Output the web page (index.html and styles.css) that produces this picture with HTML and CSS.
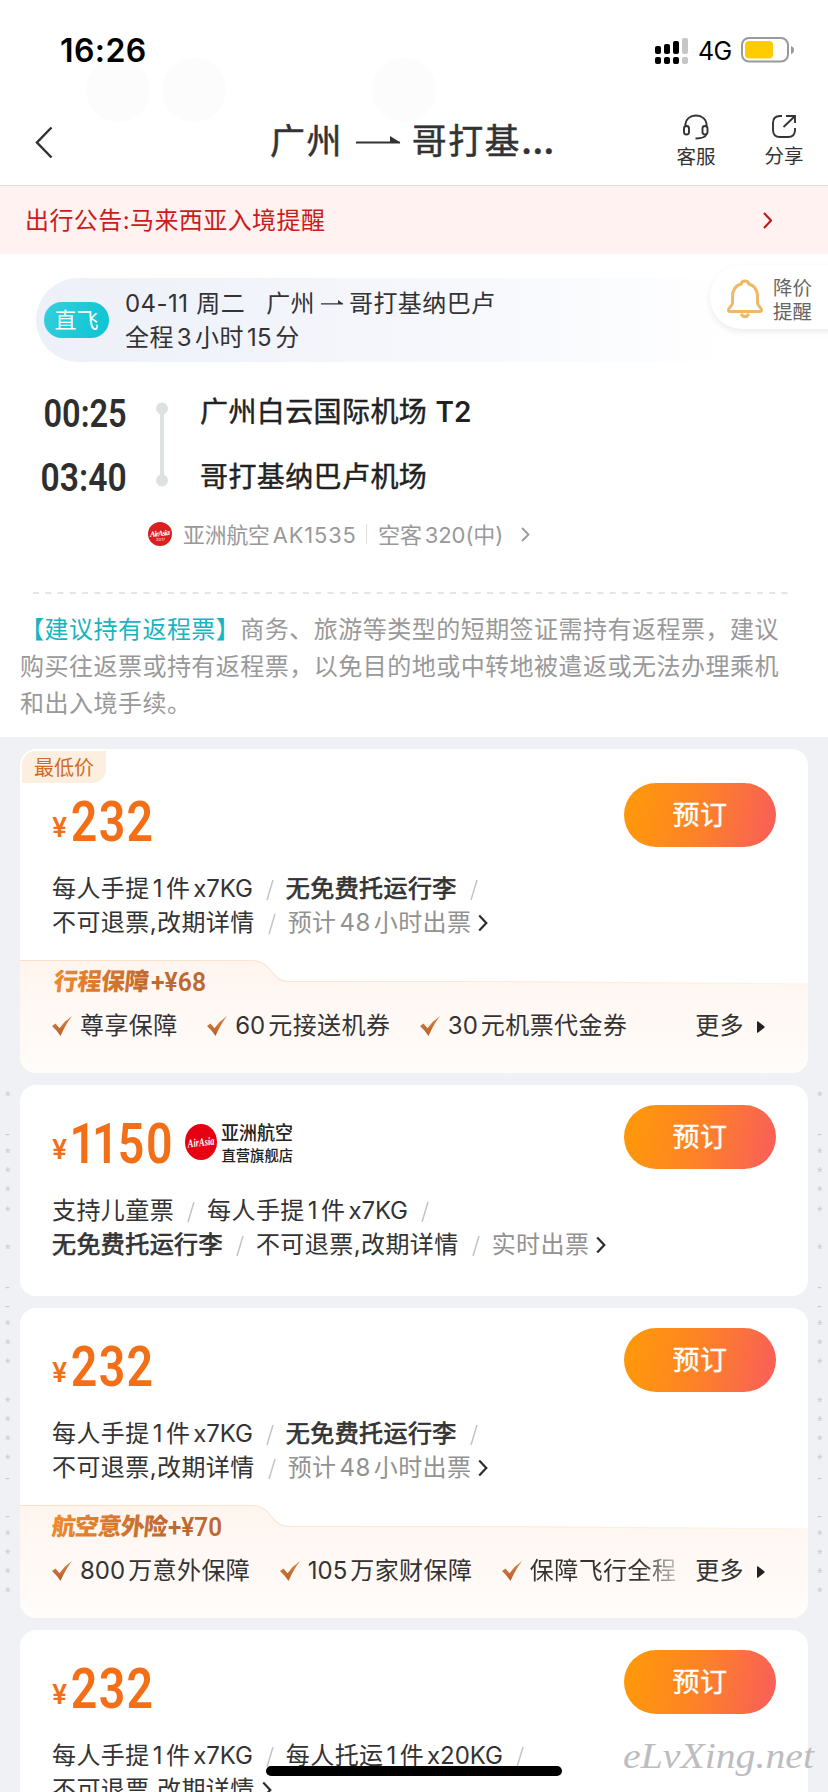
FILE: index.html
```
<!DOCTYPE html>
<html lang="zh-CN">
<head>
<meta charset="utf-8">
<title>广州 - 哥打基纳巴卢</title>
<link rel="stylesheet" href="styles.css">
</head>
<body>
<svg class="defs" width="0" height="0" aria-hidden="true">
  <defs>
    <linearGradient id="gold" x1="0" y1="0" x2="1" y2="0"><stop offset="0" stop-color="#ee8a2e"/><stop offset="1" stop-color="#c0692f"/></linearGradient>
    <linearGradient id="tick" x1="0" y1="0" x2="0" y2="1"><stop offset="0" stop-color="#df8540"/><stop offset="1" stop-color="#b75e2c"/></linearGradient>
    <linearGradient id="panel" x1="0" y1="0" x2="0" y2="1"><stop offset="0" stop-color="#fff5ef"/><stop offset="1" stop-color="#fffcfa"/></linearGradient>
    <linearGradient id="edge" x1="0" y1="0" x2="1" y2="0"><stop offset="0" stop-color="#fbe0c6"/><stop offset=".4" stop-color="#fbe6d6"/><stop offset="1" stop-color="#fff3e8"/></linearGradient>
  </defs>
  <symbol id="slash" viewBox="0 0 8 22"><path d="M7 1 1 21" stroke="#c4c4c4" stroke-width="1.5" fill="none"/></symbol>
  <symbol id="more" viewBox="0 0 10 18"><path d="M1.2 1.6 8.3 9 1.2 16.4" stroke="#2c2c2c" stroke-width="2.2" fill="none"/></symbol>
  <symbol id="check" viewBox="0 0 20 20"><path d="M0 10 3.500 7.500 7.500 12.200Q12.500 5 20 0 13.500 8.500 8.500 20 5 14.500 0 10Z" fill="url(#tick)"/></symbol>
  <symbol id="tri" viewBox="0 0 8 12"><path d="M0 1Q0-.4 1.200.5L7.300 5.200Q8 6 7.300 6.800L1.200 11.500Q0 12.400 0 11Z" fill="#222"/></symbol>
  <symbol id="cover" viewBox="0 0 788 113"><path d="M0 .5H230C255 .5 248 21.500 270 21.500H480L788 24V113H0Z" fill="url(#panel)"/><path d="M0 .5H230C255 .5 248 21.500 270 21.500H480L788 24" fill="none" stroke="url(#edge)" stroke-width="1.2"/></symbol>
</svg>

<main class="page">
  <div class="circles"><i></i><i></i><i></i></div>
  <header class="top">
    <div class="status">
      <span class="clock">16:26</span>
      <svg class="signal" width="33" height="26" viewBox="0 0 33 26"><rect y="8" width="6" height="8" rx="2"/><rect x="9" y="6" width="6" height="10" rx="2"/><rect x="18" y="3" width="6" height="13" rx="2"/><rect x="27" y="0" width="6" height="16" rx="2" fill="#c6c6c6"/><rect y="19" width="6" height="7" rx="2"/><rect x="9" y="19" width="6" height="7" rx="2"/><rect x="18" y="19" width="6" height="7" rx="2"/><rect x="27" y="19" width="6" height="7" rx="2" fill="#c6c6c6"/></svg>
      <span class="net">4G</span>
      <svg class="battery" width="53" height="26" viewBox="0 0 53 26"><rect x="1" y="1" width="46" height="23.500" rx="7" fill="#fff" stroke="#999" stroke-width="2"/><rect x="4" y="4" width="28" height="17.500" rx="4" fill="#fc0"/><path d="M50 9Q53 10 53 13T50 17Z" fill="#999"/></svg>
    </div>
    <nav class="nav">
      <svg class="back" width="18" height="33" viewBox="0 0 18 33"><path d="M16.500 1.500 2 16.500 16.500 31.500" fill="none" stroke="#333" stroke-width="2.500"/></svg>
      <h1 class="title">广州<svg class="title-arrow" width="46" height="8" viewBox="0 0 46 8"><path d="M1 5.500H45V7.500H1ZM35 0 45.500 6.500H35Z" fill="#333"/></svg>哥打基<span class="dots">...</span></h1>
      <div class="action">
        <svg width="28" height="26" viewBox="0 0 28 26" fill="none" stroke="#333" stroke-width="1.900"><path d="M3.500 12C2.500-2 25.500-2 24.500 12"/><rect x="2" y="12" width="5" height="8.500" rx="2.500"/><rect x="20.500" y="12" width="5" height="8.500" rx="2.500"/><path d="M24.500 20Q23 24.600 13.500 24.500"/></svg>
        <span>客服</span>
      </div>
      <div class="action share">
        <svg width="26" height="25" viewBox="0 0 26 25" fill="none" stroke="#333" stroke-width="1.900"><path d="M11 2H9Q2 2 2 9V16Q2 23 9 23H17Q24 23 24 16V14M15 2H24V9M23.500 2.500 12.500 13"/></svg>
        <span>分享</span>
      </div>
    </nav>
  </header>

  <section class="notice"><span>出行公告:马来西亚入境提醒</span><svg width="9" height="17" viewBox="0 0 9 17"><path d="M1 1 8 8.500 1 16" stroke="#c21414" stroke-width="2" fill="none"/></svg></section>

  <section class="flight">
    <div class="summary">
      <span class="direct">直飞</span>
      <div class="route">
        <div>04-11<span class="day">周二</span><span class="od">广州</span><svg width="23" height="5" viewBox="0 0 23 5"><path d="M0 3.200H22V4.400H0ZM17 0 22.500 4H17Z" fill="#333"/></svg>哥打基纳巴卢</div>
        <div>全程<b class="n">3</b>小时<b class="n">15</b>分</div>
      </div>
    </div>
    <div class="legs">
      <svg class="times" width="170" height="110" viewBox="0 0 170 110"><g transform="scale(.82 1)"><text x="53" y="37" textLength="101.500" lengthAdjust="spacingAndGlyphs">00:25</text><text x="49.500" y="101" textLength="105" lengthAdjust="spacingAndGlyphs">03:40</text></g><path d="M162 18V91" stroke="#dde1e1" stroke-width="4"/><circle cx="162" cy="18.500" r="6" fill="#dde1e1"/><circle cx="162" cy="90.500" r="6" fill="#dde1e1"/></svg>
      <div class="ports"><div>广州白云国际机场 <span class="t2">T2</span></div><div>哥打基纳巴卢机场</div></div>
    </div>
    <div class="carrier">
      <svg width="24" height="24" viewBox="0 0 24 24"><circle cx="12" cy="12" r="12" fill="#d9201f"/><text class="brand" x="2" y="14" textLength="20" font-size="8" transform="rotate(-6 12 12)">AirAsia</text><text x="8" y="19" textLength="9" font-size="4" fill="#fff">2017</text></svg>
      <span class="name">亚洲航空<b class="n">AK1535</b></span><i class="bar"></i><span>空客<b class="n type">320(</b>中<b>)</b></span>
      <svg class="chev" width="9" height="15" viewBox="0 0 9 15"><path d="M1 1 7.500 7.500 1 14" stroke="#999" stroke-width="1.800" fill="none"/></svg>
    </div>
    <svg class="dash" width="760" height="2"><path d="M0 1H760" stroke="#ddd" stroke-width="1.500" stroke-dasharray="6 6.270"/></svg>
    <p class="advice"><em>【建议持有返程票】</em>商务、旅游等类型的短期签证需持有返程票，建议<br>购买往返票或持有返程票，以免目的地或中转地被遣返或无法办理乘机<br>和出入境手续。</p>
  </section>

  <section class="list">
    <pre class="stars left">*

-
****

*

--
***

****
-

-
****</pre>
    <pre class="stars right">*

-
****

*

--
***

****
-

-
****</pre>

    <article class="card lowest">
      <span class="tag">最低价</span>
      <div class="head">
        <svg class="price" width="110" height="60" viewBox="0 0 110 60"><text class="yen" x="-1" y="54" textLength="18">¥</text><text transform="scale(.83 1)" x="21.500 55 88.500" y="58">232</text></svg>
        <a class="book">预订</a>
      </div>
      <div class="info">每人手提<b class="n">1</b>件<b class="n kg">x7KG</b><svg class="sl"><use href="#slash"/></svg><strong>无免费托运行李</strong><svg class="sl"><use href="#slash"/></svg><br>不可退票,改期详情<svg class="sl"><use href="#slash"/></svg><span class="dim">预计<b class="n">48</b>小时出票</span><svg class="ch"><use href="#more"/></svg></div>
      <div class="cover">
        <svg class="cover-bg" width="788" height="113"><use href="#cover"/></svg>
        <svg class="cover-title" width="220" height="32" viewBox="0 0 220 32"><text class="cn" transform="translate(0 29.500) skewX(-6)" x="0" y="0" textLength="95">行程保障</text><text class="amount" x="98" y="30.500" textLength="55" lengthAdjust="spacingAndGlyphs">+¥68</text></svg>
        <div class="perks"><span><svg class="ck"><use href="#check"/></svg>尊享保障</span><span><svg class="ck"><use href="#check"/></svg><b class="lead">60</b>元接送机券</span><span><svg class="ck"><use href="#check"/></svg><b class="lead">30</b>元机票代金券</span><span class="all">更多<svg class="tri"><use href="#tri"/></svg></span></div>
      </div>
    </article>

    <article class="card plain">
      <div class="head">
        <svg class="price" width="250" height="60" viewBox="0 0 250 60"><text class="yen" x="-1" y="54" textLength="18">¥</text><text transform="scale(.83 1)" x="20 47 78 112" y="58">1150</text><ellipse cx="148" cy="37" rx="16" ry="18" fill="#e60012"/><text class="brand" x="134.500" y="41" font-size="11.500" textLength="27" lengthAdjust="spacingAndGlyphs" transform="rotate(-6 148 37)">AirAsia</text><text class="shop" x="168" y="35" textLength="72" lengthAdjust="spacingAndGlyphs">亚洲航空</text><text class="shop small" x="168.500" y="56" textLength="71.500" lengthAdjust="spacingAndGlyphs">直营旗舰店</text></svg>
        <a class="book">预订</a>
      </div>
      <div class="info">支持儿童票<svg class="sl"><use href="#slash"/></svg>每人手提<b class="n">1</b>件<b class="n kg">x7KG</b><svg class="sl"><use href="#slash"/></svg><br><strong>无免费托运行李</strong><svg class="sl"><use href="#slash"/></svg>不可退票,改期详情<svg class="sl"><use href="#slash"/></svg><span class="dim">实时出票</span><svg class="ch"><use href="#more"/></svg></div>
    </article>

    <article class="card">
      <div class="head">
        <svg class="price" width="110" height="60" viewBox="0 0 110 60"><text class="yen" x="-1" y="54" textLength="18">¥</text><text transform="scale(.83 1)" x="21.500 55 88.500" y="58">232</text></svg>
        <a class="book">预订</a>
      </div>
      <div class="info">每人手提<b class="n">1</b>件<b class="n kg">x7KG</b><svg class="sl"><use href="#slash"/></svg><strong>无免费托运行李</strong><svg class="sl"><use href="#slash"/></svg><br>不可退票,改期详情<svg class="sl"><use href="#slash"/></svg><span class="dim">预计<b class="n">48</b>小时出票</span><svg class="ch"><use href="#more"/></svg></div>
      <div class="cover">
        <svg class="cover-bg" width="788" height="113"><use href="#cover"/></svg>
        <svg class="cover-title" width="220" height="32" viewBox="0 0 220 32"><text class="cn" transform="translate(-2 29.500) skewX(-6)" x="0" y="0" textLength="116">航空意外险</text><text class="amount" x="115" y="30.500" textLength="54" lengthAdjust="spacingAndGlyphs">+¥70</text></svg>
        <div class="perks"><span><svg class="ck"><use href="#check"/></svg><b class="lead">800</b>万意外保障</span><span><svg class="ck"><use href="#check"/></svg><b class="lead">105</b>万家财保障</span><span class="fade"><svg class="ck"><use href="#check"/></svg>保障飞行全程</span><span class="all">更多<svg class="tri"><use href="#tri"/></svg></span></div>
      </div>
    </article>

    <article class="card plain">
      <div class="head">
        <svg class="price" width="110" height="60" viewBox="0 0 110 60"><text class="yen" x="-1" y="54" textLength="18">¥</text><text transform="scale(.83 1)" x="21.500 55 88.500" y="58">232</text></svg>
        <a class="book">预订</a>
      </div>
      <div class="info">每人手提<b class="n">1</b>件<b class="n kg">x7KG</b><svg class="sl"><use href="#slash"/></svg>每人托运<b class="n">1</b>件<b class="n kg">x20KG</b><svg class="sl"><use href="#slash"/></svg><br>不可退票,改期详情<svg class="ch"><use href="#more"/></svg></div>
    </article>
  </section>

  <aside class="alert">
    <svg width="36" height="40" viewBox="0 0 36 40" fill="none" stroke="#f2b766" stroke-width="3"><path d="M18 2C15.500 2 14.500 3.500 14.200 5 8 6.500 5.500 12 5.500 18V24C5.500 27 1.500 28.500 1.500 31 1.500 32 2 32.500 3 32.500H33C34 32.500 34.500 32 34.500 31 34.500 28.500 30.500 27 30.500 24V18C30.500 12 28 6.500 21.800 5 21.500 3.500 20.500 2 18 2Z"/><path d="M14 35Q18 40.500 22 35"/></svg>
    <span>降价<br>提醒</span>
  </aside>
  <div class="home"></div>
  <svg class="mark" width="206" height="54"><text x="3" y="34" textLength="191" lengthAdjust="spacingAndGlyphs">eLvXing.net</text></svg>
</main>
</body>
</html>
```
FILE: styles.css
```
* { box-sizing: border-box; }
body { margin: 0; background: #fff; }
.defs { position: absolute; }
.page {
  position: relative; width: 828px; height: 1792px; overflow: hidden; background: #fff; color: #333;
  font: 24px/34px Inter, "Noto Sans CJK SC", sans-serif; letter-spacing: .42px;
}
svg { flex: none; }
b { font-weight: 400; }

.circles i { position: absolute; top: 58px; left: 86px; width: 64px; height: 64px; border-radius: 50%; background: #fcfcfc; }
.circles i:nth-child(2) { left: 162px; }
.circles i:nth-child(3) { left: 372px; }

.top { position: relative; height: 186px; border-bottom: 1px solid #dedcdc; }
.status { display: flex; align-items: center; height: 100px; padding-left: 60px; color: #000; }
.clock { width: 595px; padding-top: 1px; font-size: 32px; font-weight: 600; letter-spacing: .4px; }
.signal { margin-top: 1px; }
.net { width: 43px; padding: 2px 0 0 10px; font-size: 25px; letter-spacing: -.6px; }
.battery { margin-left: 10px; }
.nav { display: flex; align-items: flex-start; padding-left: 35px; }
.back { margin-top: 26px; }
.title { width: 606px; margin: 15px 0 0; padding-left: 217px; font-size: 35px; font-weight: 400; line-height: 52px; letter-spacing: 1.4px; white-space: nowrap; -webkit-text-stroke: .5px #333; }
.title-arrow { margin: 0 11px 0 12px; vertical-align: 10px; }
.dots { font-weight: 600; letter-spacing: 0; }
.action { width: 54px; margin: 14px 0 0 10px; display: flex; flex-direction: column; align-items: center; font-size: 19.500px; line-height: 24px; letter-spacing: 0; }
.action svg { margin-bottom: 5px; }
.action.share { margin-left: 34px; }

.notice { display: flex; justify-content: space-between; align-items: center; height: 68px; padding: 0 56px 0 25px; background: #fff2f1; color: #cb1c1c; }
.notice span { padding-top: 2px; }

.flight { height: 483px; padding-top: 24px; }
.summary { display: flex; align-items: center; height: 84px; margin-left: 36px; width: 700px; border-radius: 42px; background: linear-gradient(90deg, #eef0f9, #f5f7fc 55%, #fff); padding-left: 8px; }
.direct { width: 65px; height: 36px; border-radius: 18px; margin-right: 16px; background: linear-gradient(115deg, #35cfdc, #0bc4d3); color: #fff; font-size: 22px; line-height: 36px; text-align: center; letter-spacing: 0; }
.route { height: 68px; margin-top: 2px; }
.route svg { margin: 0 5px 0 6px; vertical-align: 7px; }
.day { margin-left: 8px; }
.od { margin-left: 21px; }
.n { margin: 0 3px; }
.legs { display: flex; height: 134px; padding-top: 28px; }
.times text { font: 600 38px Roboto; fill: #2e2e2e; letter-spacing: 0; }
.ports { padding-left: 30px; margin-top: -10.500px; font-size: 28px; line-height: 65.500px; letter-spacing: .4px; color: #222; -webkit-text-stroke: .45px #222; }
.t2 { font-weight: 600; -webkit-text-stroke: 0; font-size: 28px; letter-spacing: 0; }
.carrier { display: flex; align-items: center; height: 34px; margin-top: 21px; padding-left: 148px; color: #999; font-size: 22px; letter-spacing: -.1px; }
.carrier span { padding-top: 2px; }
.name { margin-left: 11px; width: 183px; font-size: 21.800px; }
.bar { width: 1px; height: 20px; margin-right: 11px; background: #ddd; }
.name .n { margin-right: 0; letter-spacing: .9px; }
.type { margin-right: 0; }
.chev { margin-left: 18px; }
.brand { font-family: "Liberation Serif", serif; font-style: italic; font-weight: 700; fill: #fff; letter-spacing: 0; }
.dash { display: block; margin: 41px 0 0 33px; }
.advice { margin: 17px 0 0 20px; line-height: 37px; color: #999; white-space: nowrap; letter-spacing: .48px; }
.advice em { font-style: normal; color: #18b4c2; }

.list { position: relative; display: flex; flex-direction: column; gap: 12px; padding: 12px 20px; background: #f0f1f5; height: 1055px; }
.stars { position: absolute; top: 350px; margin: 0; font: 14px/19.100px "Liberation Sans", sans-serif; color: #c9cbd0; width: 1px; left: 5px; word-break: break-all; white-space: pre-wrap; letter-spacing: 0; }
.stars.right { left: 817px; }
.card { position: relative; flex: none; padding: 0 32px 0 33px; border-radius: 16px; background: #fff; overflow: hidden; }
.card.lowest { padding-top: 14px; }
.tag { position: absolute; left: 2px; top: 2px; width: 84px; height: 32px; border-radius: 14px 0 14px 0; background: #fcefdf; color: #cf6b29; text-align: center; font-size: 20px; line-height: 35px; letter-spacing: 0; }
.head { display: flex; justify-content: space-between; height: 107px; padding-top: 20px; }
.price { font: 600 56px Roboto; fill: #f36f17; letter-spacing: 0; overflow: visible; }
.price .yen { font: 600 27px Inter; }
.price .brand { font-family: "Liberation Serif", serif; fill: #fff; }
.price .shop { font: 500 19px "Noto Sans CJK SC"; fill: #222; }
.price .shop.small { font-size: 15px; }
.book { width: 152px; height: 64px; border-radius: 32px; background: linear-gradient(100deg, #ff970c 8%, #fd8227 50%, #f95f58 97%); color: #fff; font-size: 27px; line-height: 65px; text-align: center; -webkit-text-stroke: .4px #fff; }
.info { height: 70px; margin: 0 0 -2px -1px; padding-top: 2px; white-space: nowrap; line-height: 34px; }
.info strong { font-weight: 400; -webkit-text-stroke: .7px #333; }
.plain .info { margin-bottom: 34px; }
.kg { letter-spacing: -.1px; margin-right: 0; }
.sl { width: 8px; height: 22px; margin: 0 12px 0 13px; vertical-align: -4px; }
.ch { width: 10px; height: 18px; margin-left: 7px; vertical-align: -1px; }
.dim { color: #929292; }
.cover { position: relative; height: 113px; margin: 22px -32px 0 -33px; }
.cover-bg { position: absolute; left: 0; top: 0; }
.cover-title { position: relative; display: block; margin-left: 33px; letter-spacing: 0; overflow: visible; }
.cn { font: 900 24px "Noto Sans CJK SC"; fill: url(#gold); }
.amount { font: 600 25px Roboto; fill: #bd6a31; }
.perks { position: relative; display: flex; padding: 17px 0 0 32px; line-height: 34px; white-space: nowrap; }
.perks span { margin-right: 29.500px; }
.ck { width: 20px; height: 20px; margin-right: 8px; vertical-align: -2px; }
.lead { margin-right: 3px; letter-spacing: 0; }
.perks .all { margin: 0 0 0 auto; padding-right: 43px; }
.perks .fade { margin-right: 0; background: linear-gradient(90deg, #333 80%, #c5c0bd); -webkit-background-clip: text; background-clip: text; color: transparent; }
.tri { width: 8px; height: 12px; margin-left: 13px; vertical-align: 1px; }

.alert { position: absolute; left: 710px; top: 265px; display: flex; align-items: center; width: 130px; height: 64px; padding-left: 17px; border-radius: 32px 0 0 32px; background: #fff; box-shadow: 0 3px 7px rgba(0,0,0,.08); color: #666; font-size: 19.500px; line-height: 24px; letter-spacing: 0; }
.alert span { margin-left: 10px; padding-top: 5px; }
.alert svg { margin-top: 4px; }
.home { position: absolute; left: 266px; top: 1766px; width: 296px; height: 10px; border-radius: 5px; background: #000; }
.mark { position: absolute; left: 620px; top: 1734px; overflow: visible; }
.mark text { font: italic 36px "Liberation Serif", serif; fill: #bdbdbf; letter-spacing: 0; }
```
